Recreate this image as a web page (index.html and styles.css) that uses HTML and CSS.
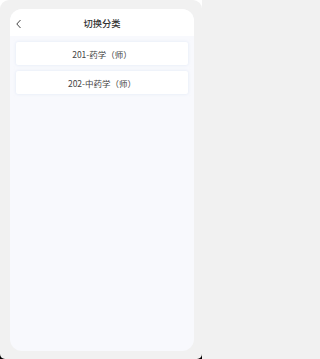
FILE: index.html
```html
<!DOCTYPE html>
<html lang="zh">
<head>
<meta charset="utf-8">
<link rel="stylesheet" href="styles.css">
</head>
<body>
<div class="screen">
  <div class="frame">
    <div class="card">
      <div class="header">
        <svg class="back" width="8" height="10" viewBox="0 0 8 10"><path d="M5.5 1 L1.8 5 L5.5 9" fill="none" stroke="#444" stroke-width="1"/></svg>
        <div class="title">切换分类</div>
      </div>
      <div class="list">
        <div class="item">201-药学（师）</div>
        <div class="item">202-中药学（师）</div>
      </div>
    </div>
  </div>
</div>
</body>
</html>
```
FILE: styles.css
```css
html, body {
  margin: 0;
  padding: 0;
  background: #f1f1f1;
  font-family: "Noto Sans CJK SC", "Noto Sans", sans-serif;
}
.screen {
  width: 202px;
  height: 359px;
  background: linear-gradient(#ffffff 50%, #000000 50%);
  display: flex;
}
.frame {
  flex: 1;
  background: #f1f1f1;
  border-radius: 9px 9px 5px 5px;
  box-sizing: border-box;
  padding: 9px 8px 8px 10px;
  display: flex;
}
.card {
  flex: 1;
  border-radius: 12px;
  background: #f8f9fd;
  overflow: hidden;
  display: flex;
  flex-direction: column;
}
.header {
  height: 27px;
  background: #ffffff;
  position: relative;
  display: flex;
  align-items: center;
  justify-content: center;
}
.back {
  position: absolute;
  left: 5px;
  top: 10px;
}
.title {
  font-size: 9.3px;
  font-weight: 500;
  color: #333;
}
.list {
  padding: 6px 6px 0 6px;
  display: flex;
  flex-direction: column;
  gap: 6px;
}
.item {
  height: 23px;
  background: #ffffff;
  border-radius: 2px;
  box-shadow: 0 0 3px rgba(200, 215, 240, 0.5);
  display: flex;
  align-items: center;
  justify-content: center;
  font-size: 8.5px;
  color: #444;
}
```
